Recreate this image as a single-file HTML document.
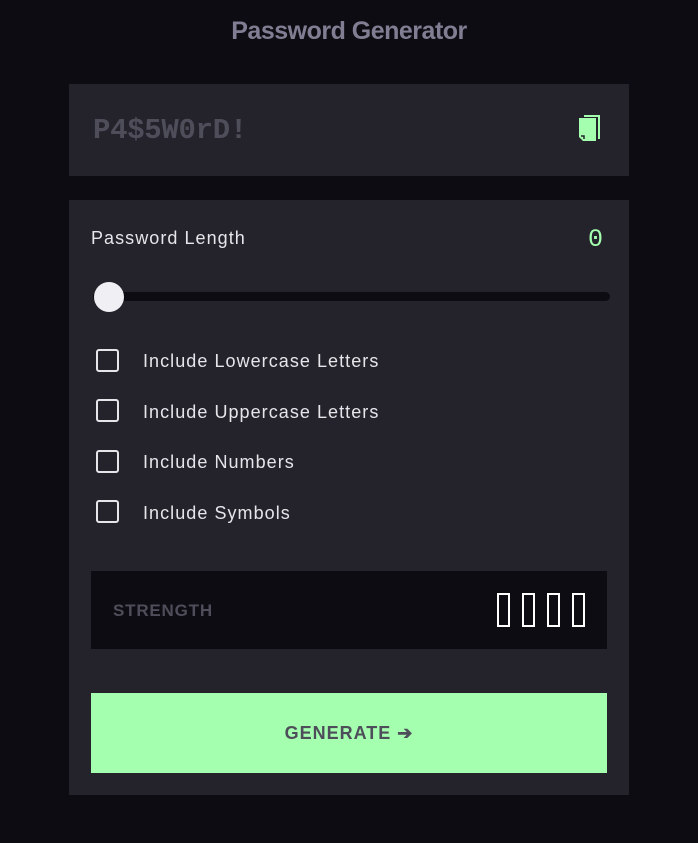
<!DOCTYPE html>
<html><head><style>
*{margin:0;padding:0;box-sizing:border-box}
body{width:698px;height:843px;background:#0d0c12;font-family:"Liberation Sans",sans-serif;position:relative;overflow:hidden;color:#e6e5ea}
.a{position:absolute}
.l{font-size:18px;letter-spacing:1.05px}
</style></head><body>
<div class="a" style="left:0;width:698px;top:17px;text-align:center;font-size:25px;font-weight:bold;color:#817d92;letter-spacing:-0.5px">Password Generator</div>
<div class="a" style="left:69px;top:84px;width:560px;height:92px;background:#24232b"></div>
<div class="a" style="left:93px;top:114px;font-family:'Liberation Mono',monospace;font-size:29px;font-weight:bold;color:#4e4d5a;letter-spacing:-0.3px">P4$5W0rD!</div>
<svg class="a" style="left:578px;top:113px" width="24" height="28" viewBox="0 0 24 28"><path d="M6 2h16v24h-2V4H6z" fill="#a4ffaf"/><path d="M1 5h17v23H5l-4-4z" fill="#a4ffaf"/><path d="M3 23h3v3" stroke="#24232b" stroke-width="1.5" fill="none"/></svg>
<div class="a" style="left:69px;top:200px;width:560px;height:595px;background:#24232b"></div>
<div class="a l" style="left:91px;top:228px">Password Length</div>
<div class="a" style="left:588px;top:225px;font-family:'Liberation Mono',monospace;font-size:25px;color:#a4ffaf">0</div>
<div class="a" style="left:93px;top:292px;width:517px;height:9px;border-radius:5px;background:#0d0c12"></div>
<div class="a" style="left:94px;top:282px;width:30px;height:30px;border-radius:50%;background:#f0eff4"></div>
<div class="a" style="left:96px;top:349px;width:23px;height:23px;border:2px solid #e6e5ea;border-radius:3px"></div>
<div class="a l" style="left:143px;top:351px">Include Lowercase Letters</div>
<div class="a" style="left:96px;top:399px;width:23px;height:23px;border:2px solid #e6e5ea;border-radius:3px"></div>
<div class="a l" style="left:143px;top:402px">Include Uppercase Letters</div>
<div class="a" style="left:96px;top:450px;width:23px;height:23px;border:2px solid #e6e5ea;border-radius:3px"></div>
<div class="a l" style="left:143px;top:452px">Include Numbers</div>
<div class="a" style="left:96px;top:500px;width:23px;height:23px;border:2px solid #e6e5ea;border-radius:3px"></div>
<div class="a l" style="left:143px;top:503px">Include Symbols</div>
<div class="a" style="left:91px;top:571px;width:516px;height:78px;background:#0d0c12"></div>
<div class="a" style="left:113px;top:601px;font-size:17px;font-weight:bold;color:#4e4d5a;letter-spacing:0.8px">STRENGTH</div>
<div class="a" style="left:497px;top:593px;width:13px;height:34px;border:2px solid #fff"></div>
<div class="a" style="left:522px;top:593px;width:13px;height:34px;border:2px solid #fff"></div>
<div class="a" style="left:547px;top:593px;width:13px;height:34px;border:2px solid #fff"></div>
<div class="a" style="left:572px;top:593px;width:13px;height:34px;border:2px solid #fff"></div>
<div class="a" style="left:91px;top:693px;width:516px;height:80px;background:#a4ffaf"></div>
<div class="a" style="left:91px;top:723px;width:516px;text-align:center;font-size:18px;font-weight:bold;color:#4e4d5a;letter-spacing:1px">GENERATE ➔</div>
</body></html>
